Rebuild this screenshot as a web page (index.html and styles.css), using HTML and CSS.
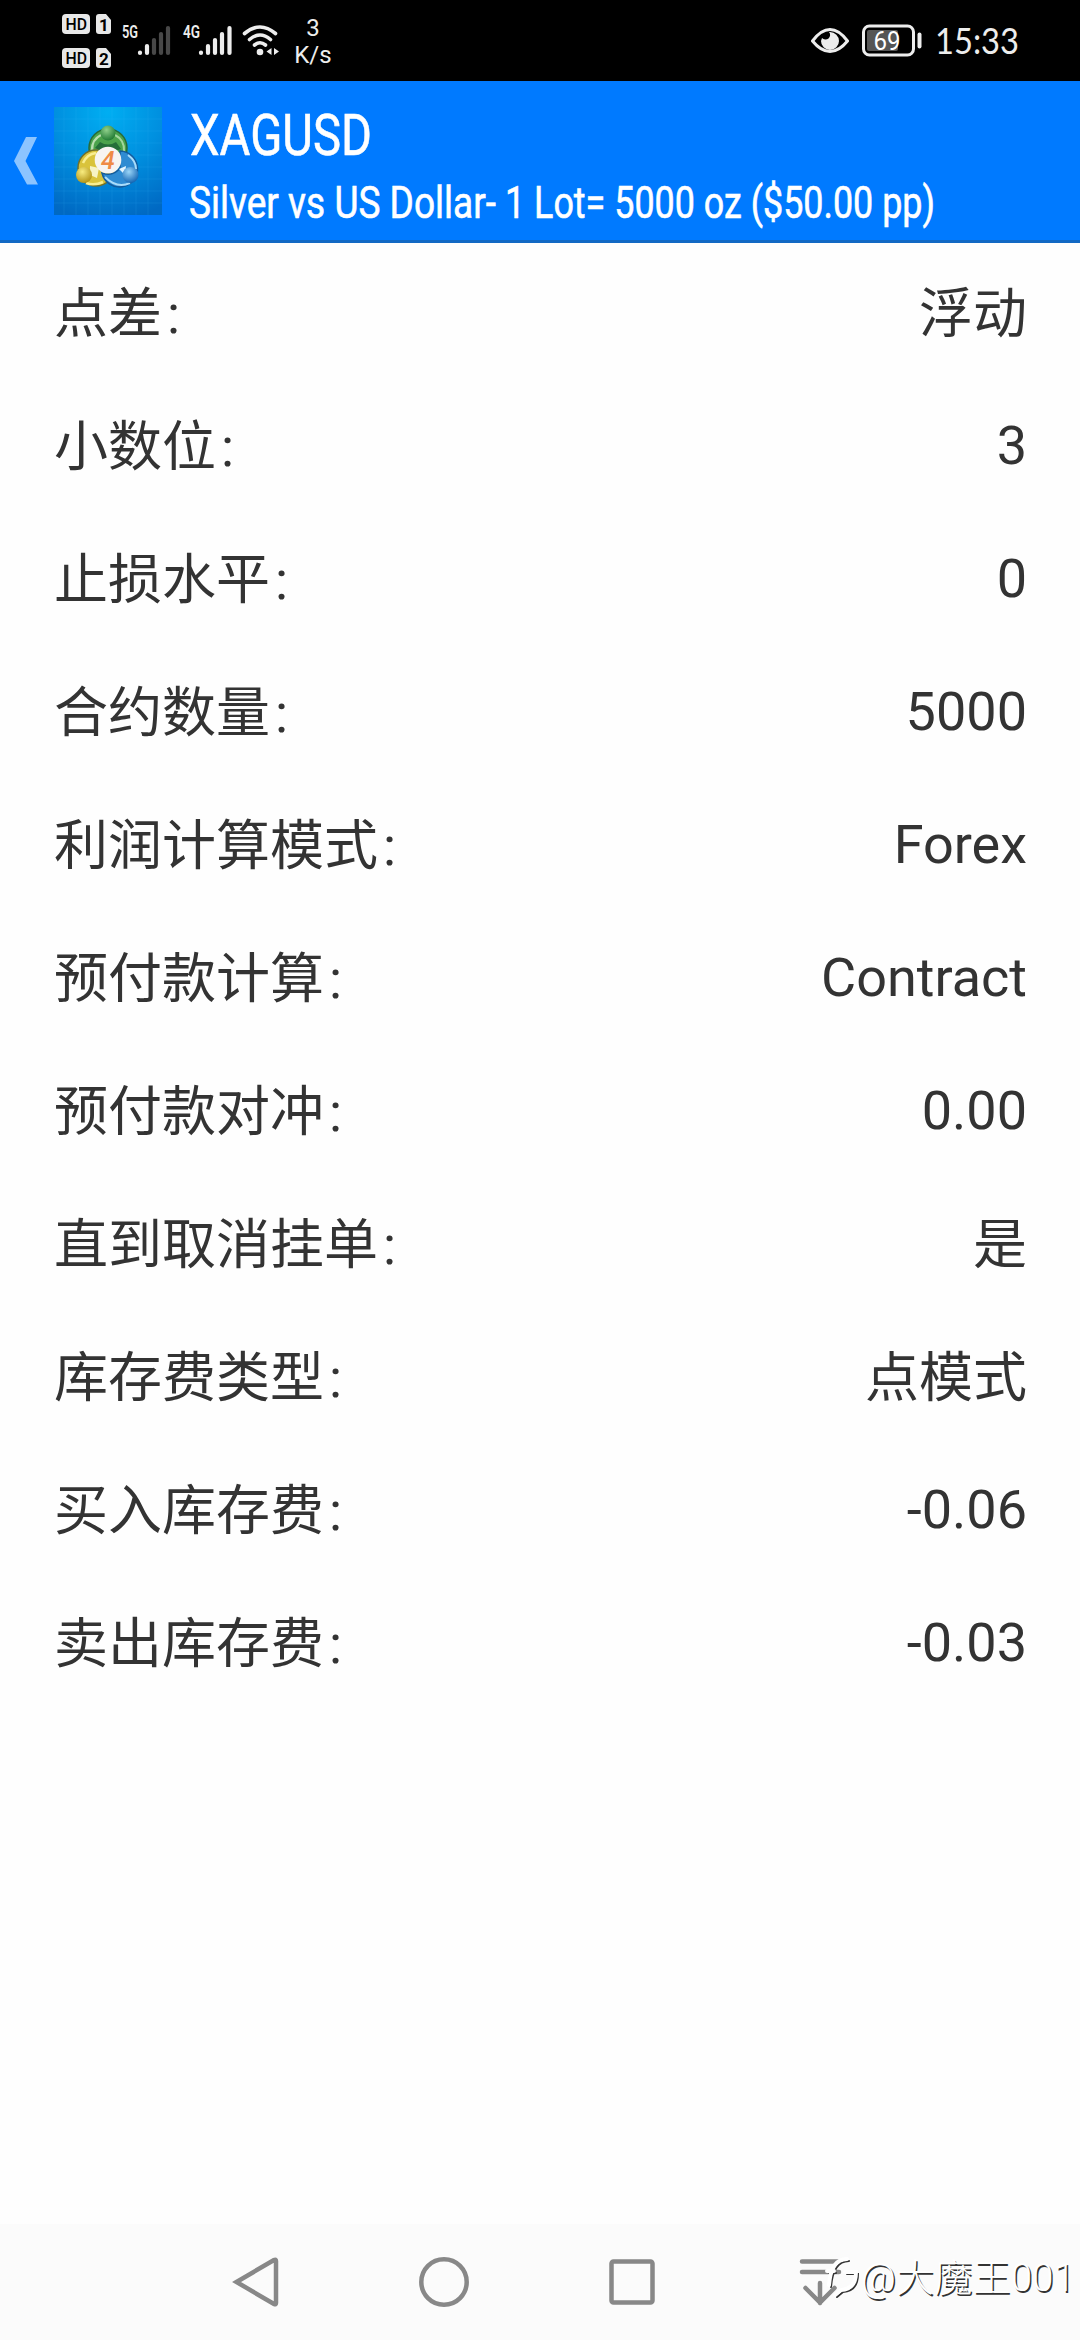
FILE: index.html
```html
<!DOCTYPE html>
<html lang="zh-CN">
<head>
    <meta charset="UTF-8">
    <meta name="viewport" content="width=device-width, initial-scale=1.0">
    <title>XAGUSD</title>
    <link rel="stylesheet" href="styles.css">
</head>
<body>
    <div class="status-bar">
        <div class="status-left">
            <svg class="hd" width="50" height="56" viewBox="0 0 50 56">
                <rect x="0" y="0" width="28" height="20" rx="4" fill="#e8e8e8"/>
                <path d="M37 0h7l5 6v11a3 3 0 0 1-3 3h-9a3 3 0 0 1-3-3V3a3 3 0 0 1 3-3z" fill="#e8e8e8"/>
                <text x="3.5" y="16" class="badge" textLength="21.5" lengthAdjust="spacingAndGlyphs">HD</text>
                <text x="37" y="16.5" class="badge bold">1</text>
                <rect x="0" y="34" width="28" height="20" rx="4" fill="#e8e8e8"/>
                <path d="M37 34h7l5 6v11a3 3 0 0 1-3 3h-9a3 3 0 0 1-3-3V37a3 3 0 0 1 3-3z" fill="#e8e8e8"/>
                <text x="3.5" y="50" class="badge" textLength="21.5" lengthAdjust="spacingAndGlyphs">HD</text>
                <text x="37" y="50.5" class="badge bold">2</text>
            </svg>
            <svg class="signal" width="52" height="40" viewBox="0 -6 52 40">
                <text x="1" y="14" class="net" textLength="16" lengthAdjust="spacingAndGlyphs">5G</text>
                <g stroke-width="4.2" stroke-linecap="round">
                    <path d="M19 28.5v.5M26 22v7" stroke="#ededed"/>
                    <path d="M33 16v13M40 10v19M47 4v25" stroke="#484848"/>
                </g>
            </svg>
            <svg class="signal" width="52" height="40" viewBox="0 -6 52 40">
                <text x="1" y="14" class="net" textLength="17" lengthAdjust="spacingAndGlyphs">4G</text>
                <path d="M19 28.5v.5M26 22v7M33 16v13M40 10v19M47.500 4v25" stroke="#ededed" stroke-width="4.2" stroke-linecap="round"/>
            </svg>
            <svg class="wifi" width="38" height="34" viewBox="0 0 38 34">
                <g fill="none" stroke="#ededed" stroke-width="3.6" stroke-linecap="round">
                    <path d="M2.500 9.500Q18 -3.500 33.500 9.500"/>
                    <path d="M7.500 15.500Q18 6.500 28.500 15.500"/>
                    <path d="M12.500 21Q18 16.500 23.500 21"/>
                </g>
                <circle cx="18" cy="28" r="3.3" fill="#ededed"/>
                <path d="M29.500 24v7l-5-3.500zM32 24v7l5-3.500z" fill="#ededed"/>
            </svg>
            <div class="speed"><span>3</span><span>K/s</span></div>
        </div>
        <div class="status-right">
            <svg width="38" height="28" viewBox="0 0 38 28">
                <path d="M1.500 14Q10 2.500 19 2.500T36.500 14Q28 24.500 19 24.500T1.500 14z" fill="none" stroke="#ededed" stroke-width="3"/>
                <path d="M19 5a9 9 0 1 1-9 9l1-3a4.500 4.500 0 1 0 7-6z" fill="#ededed"/>
            </svg>
            <svg class="battery" width="61" height="34" viewBox="0 0 61 34">
                <rect x="1.500" y="2" width="50" height="29" rx="6" fill="none" stroke="#ededed" stroke-width="3"/>
                <rect x="5" y="6" width="31" height="21" rx="2" fill="#555"/>
                <rect x="55.500" y="8.500" width="4" height="16" rx="2" fill="#ededed"/>
                <text x="11.500" y="26" class="level" textLength="27" lengthAdjust="spacingAndGlyphs">69</text>
            </svg>
            <svg class="time" width="94" height="60" viewBox="-4 -8 94 60">
                <text x="1" y="35" textLength="84" lengthAdjust="spacingAndGlyphs">15:33</text>
            </svg>
        </div>
    </div>

    <header class="header">
        <svg class="back" width="26" height="50" viewBox="0 0 26 50">
            <path d="M12 1h11L11.500 25 24 48.500H13L0 25z" fill="#8cc4ff"/>
        </svg>
        <svg class="logo" width="108" height="108" viewBox="0 0 108 108">
            <defs>
                <radialGradient id="bg" cx="50%" cy="5%" r="100%">
                    <stop offset="0" stop-color="#00aef2"/>
                    <stop offset=".5" stop-color="#008fdf"/>
                    <stop offset="1" stop-color="#0069c3"/>
                </radialGradient>
                <radialGradient id="green" cx="40%" cy="30%" r="70%">
                    <stop offset="0" stop-color="#8fd08a"/>
                    <stop offset="1" stop-color="#237c35"/>
                </radialGradient>
                <radialGradient id="yellow" cx="40%" cy="30%" r="70%">
                    <stop offset="0" stop-color="#f8ec80"/>
                    <stop offset="1" stop-color="#b39518"/>
                </radialGradient>
                <radialGradient id="blue" cx="40%" cy="30%" r="70%">
                    <stop offset="0" stop-color="#9bd5f7"/>
                    <stop offset="1" stop-color="#1768b5"/>
                </radialGradient>
            </defs>
            <rect width="108" height="108" fill="url(#bg)"/>
            <path d="M10 0v108M22 0v108M34 0v108M46 0v108M58 0v108M70 0v108M82 0v108M94 0v108M0 12h108M0 24h108M0 36h108M0 48h108M0 60h108M0 72h108M0 84h108M0 96h108" stroke="#49c5f5" stroke-opacity=".13"/>
            <circle cx="54" cy="41" r="19" fill="#4ba34b" stroke="#286b38" stroke-width="1.5"/>
            <path d="M38 43a16 16 0 0 1 9-15" fill="none" stroke="#b9deb0" stroke-width="2.5"/>
            <path d="M61 28a16 16 0 0 1 9 16" fill="none" stroke="#a2d79c" stroke-width="2"/>
            <circle cx="42" cy="61" r="18" fill="#d9c33b" stroke="#71702b" stroke-width="1.5"/>
            <path d="M29 56q4-9 13-10M32 76q8 3 17-1" fill="none" stroke="#f8ed91" stroke-width="2.5"/>
            <path d="M66 44a18 18 0 1 1-18 22q11 4 18-5z" fill="#2f8bd2" stroke="#155b9b" stroke-width="1.500"/>
            <path d="M74 48q8 6 8 14M51 70q12 12 25 6" fill="none" stroke="#a9dcfa" stroke-width="2"/>
            <path d="M41 41l5-6q8 5 16 0l5 7-13 5z" fill="#246e38"/>
            <path d="M36 59l9 2-2 10-7-3z" fill="#f7f3c5"/>
            <path d="M65 62l7-3-1 9z" fill="#e4f5ff"/>
            <circle cx="54" cy="26" r="7.500" fill="url(#green)"/>
            <circle cx="30" cy="68" r="8" fill="url(#yellow)"/>
            <circle cx="76.500" cy="68" r="8" fill="url(#blue)"/>
            <circle cx="54" cy="53" r="13.300" fill="#f7f4f1"/>
            <text x="54" y="62" class="four">4</text>
        </svg>
        <svg class="titles" width="780" height="159" viewBox="-4 0 780 159">
            <text x="0" y="74" class="symbol" textLength="182" lengthAdjust="spacingAndGlyphs">XAGUSD</text>
            <text x="-1" y="137" class="description" textLength="307" lengthAdjust="spacingAndGlyphs">Silver vs US Dollar-</text>
            <text x="315" y="137" class="description" textLength="430" lengthAdjust="spacingAndGlyphs">1 Lot= 5000 oz ($50.00 pp)</text>
        </svg>
    </header>

    <main class="properties">
        <div class="row"><span class="label">点差<i>:</i></span><span class="zh">浮动</span></div>
        <div class="row"><span class="label">小数位<i>:</i></span><span>3</span></div>
        <div class="row"><span class="label">止损水平<i>:</i></span><span>0</span></div>
        <div class="row"><span class="label">合约数量<i>:</i></span><span>5000</span></div>
        <div class="row"><span class="label">利润计算模式<i>:</i></span><span>Forex</span></div>
        <div class="row"><span class="label">预付款计算<i>:</i></span><span>Contract</span></div>
        <div class="row"><span class="label">预付款对冲<i>:</i></span><span>0.00</span></div>
        <div class="row"><span class="label">直到取消挂单<i>:</i></span><span class="zh">是</span></div>
        <div class="row"><span class="label">库存费类型<i>:</i></span><span class="zh">点模式</span></div>
        <div class="row"><span class="label">买入库存费<i>:</i></span><span>-0.06</span></div>
        <div class="row"><span class="label">卖出库存费<i>:</i></span><span>-0.03</span></div>
    </main>

    <nav class="nav-bar">
        <svg width="50" height="50" viewBox="0 0 50 50">
            <path d="M5.500 25L43 3q2-1 2 1v42q0 2-2 1z"/>
        </svg>
        <svg width="50" height="50" viewBox="0 0 50 50">
            <circle cx="25" cy="25" r="22.700"/>
        </svg>
        <svg width="50" height="50" viewBox="0 0 50 50">
            <rect x="4.500" y="4.500" width="41" height="41" rx="2"/>
        </svg>
        <svg width="50" height="50" viewBox="0 0 50 50">
            <path d="M7 4.500h37M7 15h37M25 26v20M10.500 31L25 45.500 39.500 31" stroke-linecap="round"/>
        </svg>
        <div class="watermark">
            <svg width="36" height="44" viewBox="0 0 36 44">
                <g fill="none" stroke-linecap="round">
                    <path class="mark-shade" d="M4 17h7M6 31Q8 5 24 5M22 18h11Q33 35 18 36L12 41"/>
                    <path class="mark-light" d="M2 15h7M4 29Q6 3 22 3M20 16h11Q31 33 16 34L10 39"/>
                </g>
            </svg>
            <span>@大魔王001</span>
        </div>
    </nav>
</body>
</html>
```
FILE: styles.css
```css
body {
    margin: 0;
    width: 1080px;
    height: 2340px;
    display: flex;
    flex-direction: column;
    overflow: hidden;
    background: #fefefe;
    color: #333;
    font-family: Roboto, "Noto Sans CJK SC", sans-serif;
}
svg {
    display: block;
    flex: none;
}
.status-bar {
    height: 81px;
    flex: none;
    display: flex;
    justify-content: space-between;
    background: #000;
    color: #ededed;
}
.status-left {
    display: flex;
    align-items: flex-start;
    padding-left: 62px;
}
.hd {
    margin-top: 14px;
}
.badge {
    font-size: 17px;
    font-weight: 500;
    fill: #000;
}
.bold {
    font-weight: 700;
}
.signal {
    margin: 18px 0 0 9px;
}
.net {
    font-size: 18px;
    font-weight: 600;
    fill: #ededed;
}
.wifi {
    margin: 24px 0 0 8px;
}
.speed {
    width: 40px;
    margin: 15px 0 0 13px;
    font-size: 24px;
    line-height: 27px;
    text-align: center;
    display: flex;
    flex-direction: column;
}
.status-right {
    display: flex;
    align-items: center;
    padding-right: 56px;
}
.battery {
    margin-left: 13px;
}
.level {
    font-size: 26px;
    fill: #fff;
}
.time {
    margin-left: 7px;
    font-family: Lato, sans-serif;
    font-size: 36px;
    fill: #ededed;
}
.header {
    height: 162px;
    box-sizing: border-box;
    flex: none;
    display: flex;
    align-items: center;
    background: #007aff;
    border-bottom: 3px solid #1269c4;
}
.back {
    margin-left: 14px;
}
.logo {
    margin-left: 14px;
}
.titles {
    margin-left: 24px;
    fill: #fff;
    stroke: #fff;
    stroke-width: .6px;
}
.symbol {
    font-size: 57px;
}
.description {
    font-size: 44px;
}
.four {
    font-size: 25px;
    font-weight: 500;
    font-style: italic;
    text-anchor: middle;
    fill: #ef8b45;
}
.properties {
    flex: 1;
    padding: 3px 53px 0 54px;
}
.row {
    height: 133px;
    display: flex;
    align-items: center;
    justify-content: space-between;
    font-size: 54px;
    line-height: 64px;
}
.label, .zh {
    padding-top: 4px;
}
.label i {
    margin-left: 5px;
    font-style: normal;
}
.nav-bar {
    position: relative;
    height: 116px;
    flex: none;
    display: flex;
    align-items: center;
    gap: 138px;
    padding-left: 231px;
    background: #fbfbfb;
    fill: none;
    stroke: #888;
    stroke-width: 4.5px;
}
/* lies over the last navigation key */
.watermark {
    position: absolute;
    left: 825px;
    top: 32px;
    display: flex;
    align-items: center;
    color: #fff;
    font-size: 38px;
    font-weight: 300;
    line-height: 44px;
    letter-spacing: .3px;
    text-shadow: 1.5px 1.5px 0 #333;
    white-space: nowrap;
}
.mark-shade {
    stroke: #333;
    stroke-width: 2px;
}
.mark-light {
    stroke: #fff;
    stroke-width: 4px;
}
```
